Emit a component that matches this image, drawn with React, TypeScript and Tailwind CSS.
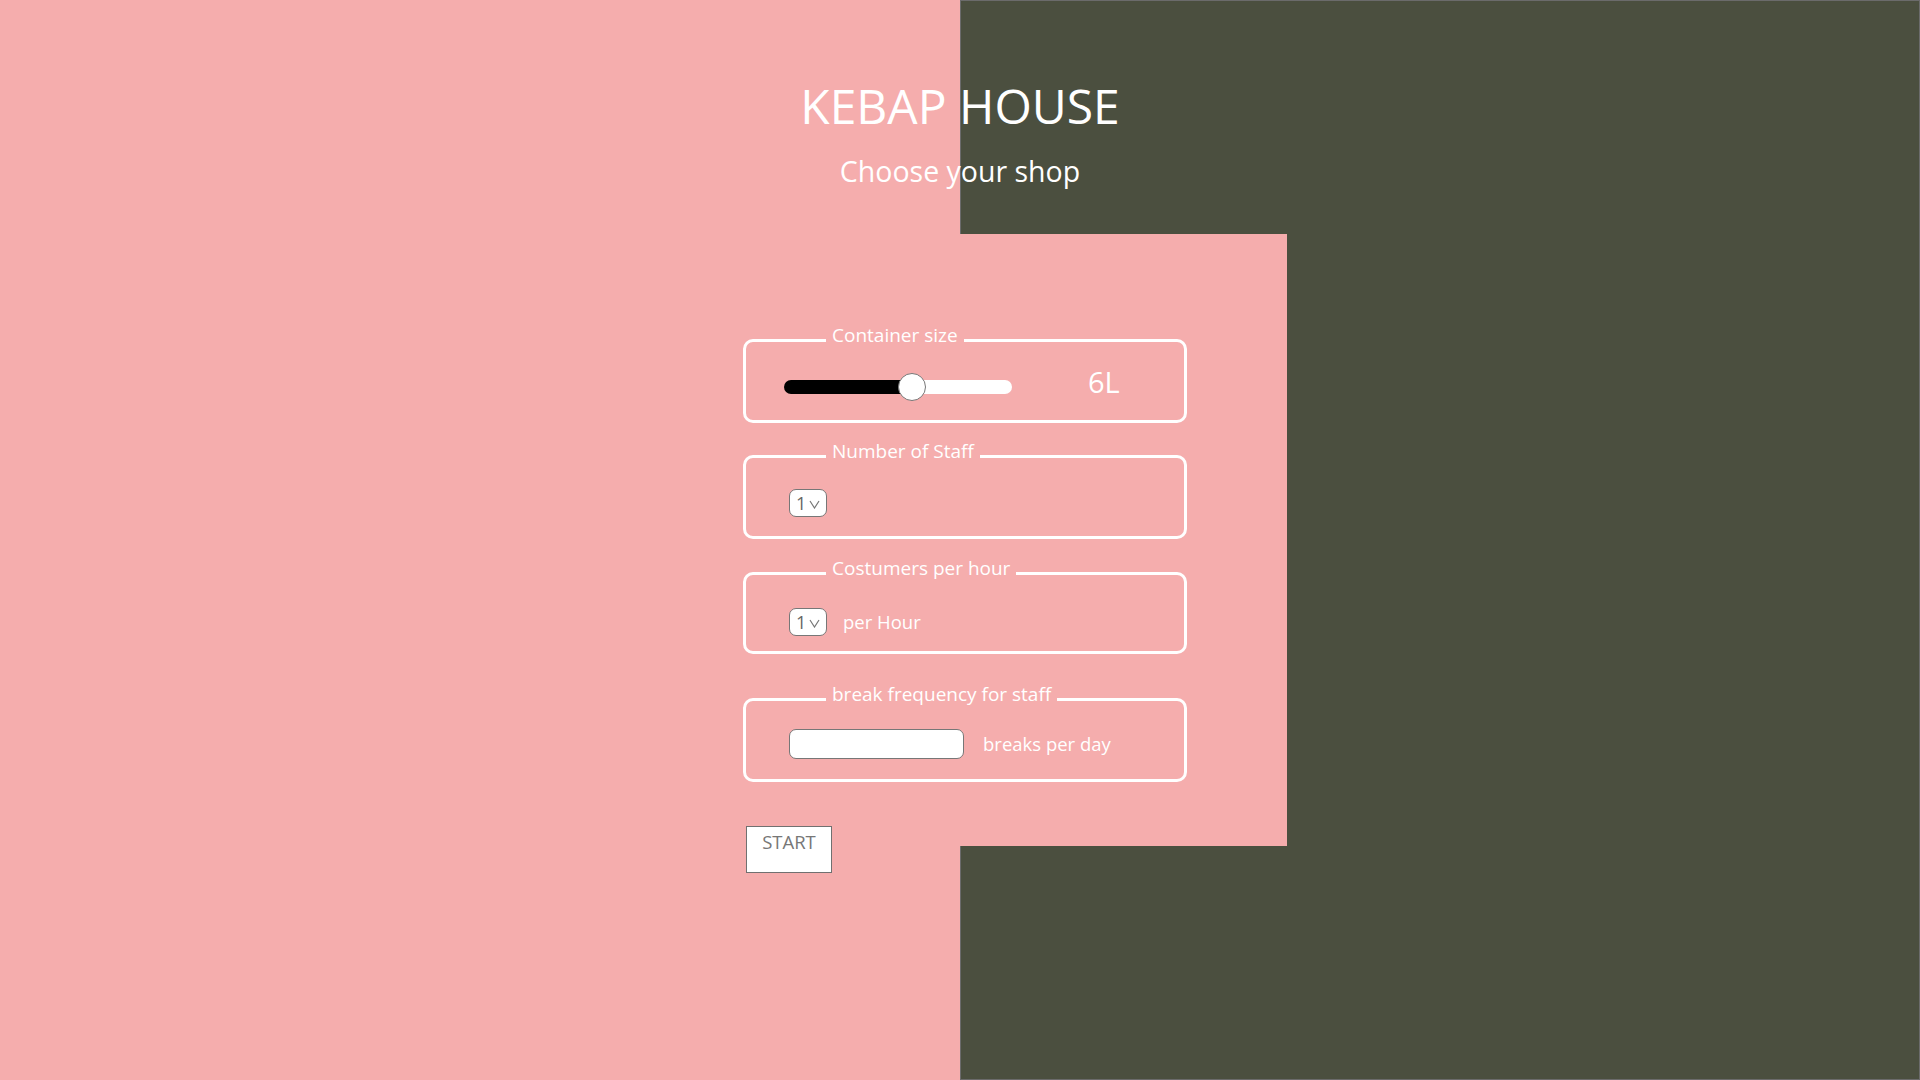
import { useState } from 'react';

// Small fake select box ("1 v")
const CountSelect = ({ value }: { value: number }) => (
  <div className="flex h-[28px] w-[38px] items-center rounded-[7px] border border-[#777] bg-white pl-[6px] text-[18px] leading-none text-[#666]">
    <span>{value}</span>
    <svg width="11" height="9" viewBox="0 0 11 9" className="ml-[3px] mt-[4px]">
      <polyline points="1,1 5.5,8 10,1" fill="none" stroke="#777" strokeWidth="1.2" />
    </svg>
  </div>
);

type BoxProps = {
  title: string;
  className?: string;
  bodyClass: string;
  children: React.ReactNode;
};

const Box = ({ title, className, bodyClass, children }: BoxProps) => (
  <fieldset className={`w-[444px] rounded-[10px] border-[3px] border-white ${className ?? ''}`}>
    <legend className="ml-[80px] px-[6px] pb-[11px] text-[19px] leading-[24px] text-white">{title}</legend>
    <div className={`flex items-center pl-[38px] ${bodyClass}`}>{children}</div>
  </fieldset>
);

export default function App() {
  const [size] = useState(6);
  const fill = 128; // px of the black part of the slider

  return (
    <div className="relative h-[1080px] w-[1920px] overflow-hidden bg-[#f5adad] font-['Open_Sans',sans-serif]">
      {/* split background */}
      <div className="absolute inset-0 flex">
        <div className="w-1/2 bg-[#f5adad]" />
        <div className="w-1/2 border border-[#6b6b6b] bg-[#4b4f3f]" />
      </div>

      <div className="relative flex flex-col items-center">
        <h1 className="mt-[73px] text-[48px] leading-[65px] text-white">KEBAP HOUSE</h1>
        <p className="mt-[14px] text-[28.5px] leading-[38px] text-white">Choose your shop</p>

        <div className="mt-[44px] h-[612px] w-[654px] bg-[#f5adad] pl-[110px] pt-[89px]">
          <Box title="Container size" bodyClass="h-[62px] pb-[5px]">
            <div className="relative flex h-[14px] w-[228px]">
              <div className="h-full rounded-l-full bg-black" style={{ width: fill }} />
              <div className="h-full flex-1 rounded-r-full bg-white" />
              <div
                className="absolute top-1/2 h-[28px] w-[28px] -translate-x-1/2 -translate-y-1/2 rounded-full border border-[#777] bg-white"
                style={{ left: fill }}
              />
            </div>
            <span className="ml-[76px] pb-[10px] text-[29px] leading-[40px] text-white">{size}L</span>
          </Box>

          <Box title="Number of Staff" className="mt-[16px]" bodyClass="h-[62px] pb-[5px]">
            <div className="ml-[5px]">
              <CountSelect value={1} />
            </div>
          </Box>

          <Box title="Costumers per hour" className="mt-[17px]" bodyClass="h-[60px] pt-[1px]">
            <div className="ml-[5px]">
              <CountSelect value={1} />
            </div>
            <span className="ml-[16px] text-[18.5px] leading-[24px] text-white">per Hour</span>
          </Box>

          <Box title="break frequency for staff" className="mt-[28px]" bodyClass="h-[62px] pb-[8px]">
            <input
              type="text"
              className="ml-[5px] h-[30px] w-[175px] rounded-[7px] border border-[#777] bg-white outline-none"
            />
            <span className="ml-[19px] text-[18.5px] leading-[24px] text-white">breaks per day</span>
          </Box>

          <button className="ml-[3px] mt-[44px] flex h-[47px] w-[86px] justify-center border border-[#707070] bg-white pt-[3px] text-[18.5px] leading-[24px] text-[#777]">
            START
          </button>
        </div>
      </div>
    </div>
  );
}
